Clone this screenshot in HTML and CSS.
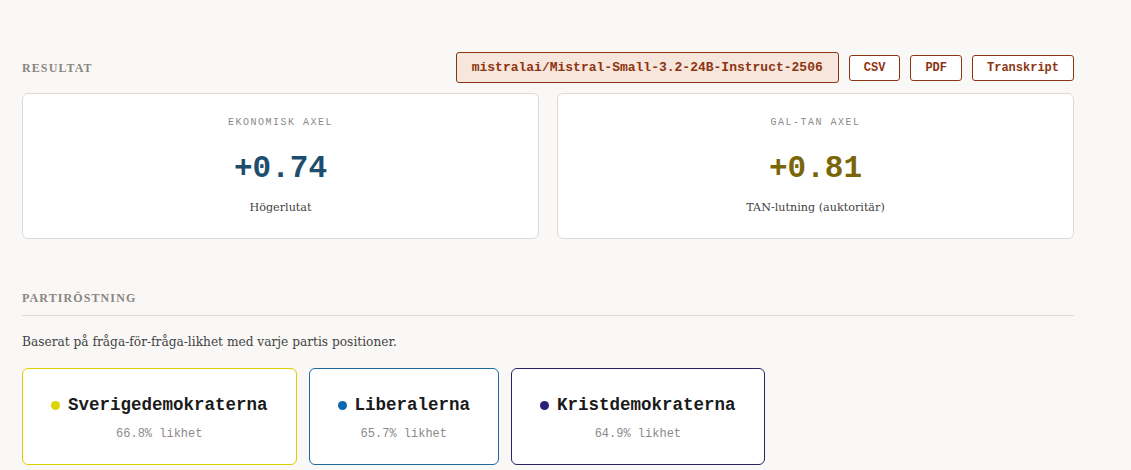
FILE: index.html
```html
<!DOCTYPE html>
<html lang="sv">
<head>
<meta charset="utf-8">
<link rel="stylesheet" href="styles.css">
</head>
<body>
<main class="page">
  <section class="results">
    <div class="results-head">
      <h2 class="section-title">RESULTAT</h2>
      <div class="actions">
        <span class="model-badge">mistralai/Mistral-Small-3.2-24B-Instruct-2506</span>
        <button class="btn">CSV</button>
        <button class="btn">PDF</button>
        <button class="btn">Transkript</button>
      </div>
    </div>
    <div class="axis-grid">
      <div class="axis-card">
        <div class="axis-label">EKONOMISK AXEL</div>
        <div class="axis-value econ">+0.74</div>
        <div class="axis-sub">Högerlutat</div>
      </div>
      <div class="axis-card">
        <div class="axis-label">GAL-TAN AXEL</div>
        <div class="axis-value galtan">+0.81</div>
        <div class="axis-sub">TAN-lutning (auktoritär)</div>
      </div>
    </div>
  </section>

  <section class="parties">
    <h2 class="section-title ruled">PARTIRÖSTNING</h2>
    <p class="desc">Baserat på fråga-för-fråga-likhet med varje partis positioner.</p>
    <div class="party-list">
      <div class="party-card sd">
        <div class="party-name"><span class="dot"></span>Sverigedemokraterna</div>
        <div class="party-sim">66.8% likhet</div>
      </div>
      <div class="party-card l">
        <div class="party-name"><span class="dot"></span>Liberalerna</div>
        <div class="party-sim">65.7% likhet</div>
      </div>
      <div class="party-card kd">
        <div class="party-name"><span class="dot"></span>Kristdemokraterna</div>
        <div class="party-sim">64.9% likhet</div>
      </div>
    </div>
  </section>
</main>
</body>
</html>
```
FILE: styles.css
```css
html, body {
  margin: 0;
  padding: 0;
  background: #f9f8f6;
}
body {
  font-family: "DejaVu Serif", "Liberation Serif", serif;
  color: #333;
}
.page {
  width: 1052px;
  padding: 52px 0 0 22px;
}
.results-head {
  display: flex;
  align-items: center;
  justify-content: space-between;
  height: 31px;
}
.section-title {
  margin: 0;
  font-family: "Liberation Serif", serif;
  font-weight: bold;
  font-size: 12px;
  letter-spacing: 1.1px;
  line-height: 14px;
  color: #8a8680;
}
.actions {
  display: flex;
  align-items: center;
  gap: 10px;
}
.model-badge {
  display: flex;
  align-items: center;
  height: 29px;
  padding: 0 15px;
  border: 1px solid #8c3512;
  border-radius: 3px;
  background: #f6e6dc;
  color: #8c3512;
  font-family: "Liberation Mono", "DejaVu Sans Mono", monospace;
  font-weight: bold;
  font-size: 13px;
}
.btn {
  height: 26px;
  padding: 0 14px;
  border: 1px solid #8c3512;
  border-radius: 3px;
  background: #fff;
  color: #8c3512;
  font-family: "Liberation Mono", "DejaVu Sans Mono", monospace;
  font-weight: bold;
  font-size: 12px;
  cursor: pointer;
}
.axis-grid {
  display: grid;
  grid-template-columns: 1fr 1fr;
  gap: 18px;
  margin-top: 10px;
}
.axis-card {
  background: #fff;
  border: 1px solid #dddad5;
  border-radius: 6px;
  padding: 22px 20px 21px;
  text-align: center;
}
.axis-label {
  font-family: "Liberation Mono", "DejaVu Sans Mono", monospace;
  font-size: 10px;
  letter-spacing: 1.5px;
  line-height: 14px;
  color: #8a8a8a;
}
.axis-value {
  margin-top: 20px;
  font-family: "Liberation Mono", "DejaVu Sans Mono", monospace;
  font-weight: bold;
  font-size: 31px;
  line-height: 38px;
}
.axis-value.econ { color: #1d4e6f; }
.axis-value.galtan { color: #7a6608; }
.axis-sub {
  margin-top: 11px;
  font-size: 11.2px;
  line-height: 18px;
  color: #444;
}
.parties {
  margin-top: 52px;
}
.section-title.ruled {
  padding-bottom: 10px;
  border-bottom: 1px solid #dddad5;
}
.desc {
  margin: 17px 0 0;
  font-size: 12.2px;
  line-height: 19px;
  color: #444;
}
.party-list {
  display: flex;
  gap: 12px;
  margin-top: 16px;
}
.party-card {
  background: #fff;
  border: 1px solid;
  border-radius: 6px;
  padding: 24px 28px 21px;
  text-align: center;
}
.party-card.sd { border-color: #d9d000; }
.party-card.l { border-color: #1d6a9e; }
.party-card.kd { border-color: #2a2266; }
.party-name {
  display: flex;
  align-items: center;
  justify-content: center;
  gap: 8px;
  font-family: "Liberation Mono", "DejaVu Sans Mono", monospace;
  font-weight: bold;
  font-size: 17.5px;
  line-height: 24px;
  color: #1a1a1a;
}
.dot {
  width: 9px;
  height: 9px;
  border-radius: 50%;
}
.sd .dot { background: #ddd400; }
.l .dot { background: #0a67b0; }
.kd .dot { background: #2b1f78; }
.party-sim {
  margin-top: 8px;
  font-family: "Liberation Mono", "DejaVu Sans Mono", monospace;
  font-size: 12px;
  line-height: 18px;
  color: #8a8a8a;
}
```
